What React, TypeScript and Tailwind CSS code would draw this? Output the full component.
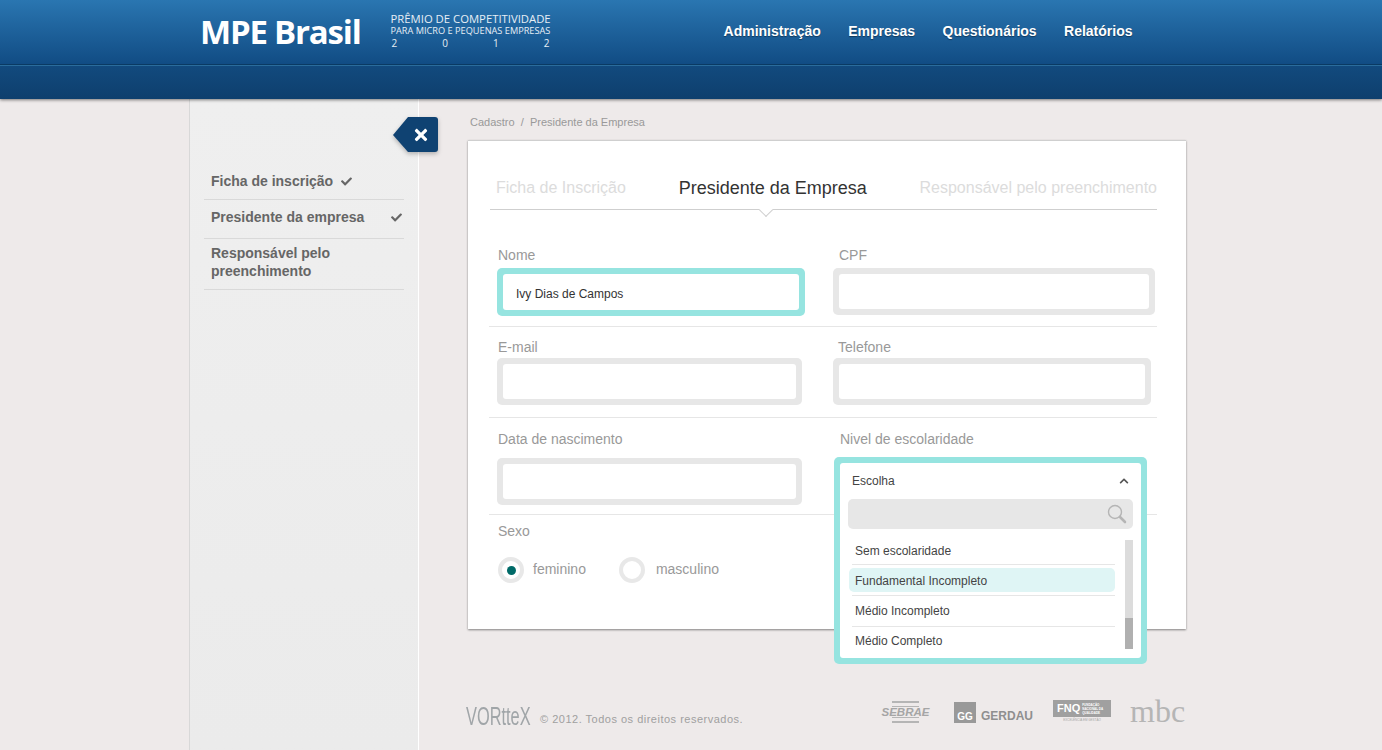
import { FaCheck, FaChevronUp, FaTimes } from "react-icons/fa";

const font = { fontFamily: '"Liberation Sans", Arial, sans-serif' };

function Field({ label, width, labelClass = "", boxClass = "mt-[5px]", active, value }: { label: string; width: string; labelClass?: string; boxClass?: string; active?: boolean; value?: string }) {
  return (
    <div className={width}>
      <p className={`text-sm leading-4 text-[#999] ${labelClass}`}>{label}</p>
      <div className={`${boxClass} rounded-[5px] p-[6px] ${active ? "h-12 bg-[#96e4e0]" : "h-[47px] bg-[#e7e7e7]"}`}>
        <div className="h-full rounded-[3px] bg-white">
          {value && <p className="pl-[13px] text-xs leading-[40px] text-[#333]">{value}</p>}
        </div>
      </div>
    </div>
  );
}

function Dropdown() {
  return (
    <div className="absolute left-[-6px] top-[26px] z-10 h-[207px] w-[313px] rounded-[5px] bg-[#96e4e0] p-[6px]">
      <div className="h-full rounded-[3px] bg-white">
        <div className="flex h-[36px] items-center justify-between pl-3 pr-3 text-xs text-[#444]">
          <span>Escolha</span>
          <FaChevronUp className="text-[10px] text-[#555]" />
        </div>
        <div className="mx-2 flex h-[30px] items-center justify-end rounded-[5px] bg-[#e7e7e7] pr-1.5">
          <svg width="20" height="20" viewBox="0 0 20 20" fill="none" stroke="#b5b5b5">
            <circle cx="8" cy="8" r="6.5" strokeWidth="1.4" />
            <path d="M13 13l5 5" strokeWidth="2.6" strokeLinecap="round" />
          </svg>
        </div>
        <div className="relative mt-[11px] pl-[9px]">
          <ul className="w-[266px] text-xs text-[#444]">
            <li className="ml-[3px] h-[25px] border-b border-[#e6e6e6] pl-[3px] pt-[4px] leading-[14px]">Sem escolaridade</li>
            <li className="mt-[3px] h-6 rounded-[5px] bg-[#dff5f5] pl-[6px] leading-[26px]">Fundamental Incompleto</li>
            <li className="ml-[3px] mt-[3px] h-[32px] border-t border-b border-[#e6e6e6] pl-[3px] leading-[31px]">Médio Incompleto</li>
            <li className="ml-[3px] h-[29px] pl-[3px] leading-[29px]">Médio Completo</li>
          </ul>
          <div className="absolute left-[285px] top-0 flex h-[109px] w-2 flex-col justify-end bg-[#dcdcdc]">
            <div className="h-[31px] bg-[#b0b0b0]" />
          </div>
        </div>
      </div>
    </div>
  );
}

function Radio({ label, checked, gap }: { label: string; checked?: boolean; gap: string }) {
  return (
    <div className={`flex items-start ${gap}`}>
      <span className="flex h-[26px] w-[26px] items-center justify-center rounded-full border-[4px] border-[#e8e8e8] bg-white">
        {checked && <span className="h-[9px] w-[9px] rounded-full bg-[#006a68]" />}
      </span>
      <span className="pt-[4px] text-sm leading-4 text-[#999]">{label}</span>
    </div>
  );
}

function Sidebar() {
  const item = "flex border-b border-[#d9d9d9] pl-[7px] text-sm font-bold leading-[18px] text-[#666]";
  return (
    <aside className="relative w-[230px] shrink-0 border-l border-r border-l-[#d8d8d8] border-r-white bg-gradient-to-b from-[#efefef] to-[#ebebeb] pl-[14px] pr-[14px] pt-[71px]">
      <div className="absolute left-[203px] top-[18px] drop-shadow-[0_2px_2px_rgba(0,0,0,0.25)]">
        <svg width="45" height="35" viewBox="0 0 45 35" className="block">
          <path d="M15 0H42a3 3 0 0 1 3 3V32a3 3 0 0 1-3 3H15L0 18z" fill="#0f4272" />
        </svg>
        <FaTimes className="absolute left-[19px] top-[9px] text-[18px] text-white" />
      </div>
      <ul>
        <li className={`${item} h-[30px] items-center pb-[7px]`}>
          Ficha de inscrição
          <FaCheck className="ml-2 text-[11px]" />
        </li>
        <li className={`${item} h-[39px] items-center pb-[4px]`}>
          Presidente da empresa
          <FaCheck className="ml-[27px] text-[11px]" />
        </li>
        <li className={`${item} h-[51px] pt-[5px]`}>
          <span>Responsável pelo<br />preenchimento</span>
        </li>
      </ul>
    </aside>
  );
}

function Card() {
  return (
    <div className="h-[489px] w-[718px] border-t border-[#cfcfcf] bg-white pl-[21px] pr-[29px] shadow-[0_1px_2px_rgba(0,0,0,0.45)]">
      <div className="relative ml-px flex h-[69px] items-end justify-between border-b border-[#cfcfcf] pb-[11px] pl-[6px] text-base leading-5 text-[#dcdcdc]">
        <span>Ficha de Inscrição</span>
        <span className="text-[18px] text-[#333]">Presidente da Empresa</span>
        <span>Responsável pelo preenchimento</span>
        <span className="absolute left-[271px] top-[64px] h-[10px] w-[10px] rotate-45 border-b border-r border-[#cfcfcf] bg-white" />
      </div>
      <div className="flex h-[117px] gap-7 border-b border-[#e6e6e6] pl-2 pt-[37px]">
        <Field label="Nome" width="w-[308px]" labelClass="pl-px" active value="Ivy Dias de Campos" />
        <Field label="CPF" width="w-[322px]" labelClass="pl-[6px]" />
      </div>
      <div className="flex h-[91px] gap-[31px] border-b border-[#e6e6e6] pl-2 pt-[12px]">
        <Field label="E-mail" width="w-[305px]" labelClass="pl-px" boxClass="mt-[3px]" />
        <Field label="Telefone" width="w-[318px]" labelClass="pl-[5px]" boxClass="mt-[3px]" />
      </div>
      <div className="flex h-[97px] gap-[38px] border-b border-[#e6e6e6] pl-2 pt-[13px]">
        <Field label="Data de nascimento" width="w-[305px]" labelClass="pl-px" boxClass="mt-[11px]" />
        <div className="relative w-[313px] text-sm leading-4 text-[#999]">
          Nivel de escolaridade
          <Dropdown />
        </div>
      </div>
      <div className="pl-[9px] pt-[8px]">
        <p className="text-sm leading-4 text-[#999]">Sexo</p>
        <div className="mt-[18px] flex gap-[33px]">
          <Radio label="feminino" gap="gap-[9px]" checked />
          <Radio label="masculino" gap="gap-[11px]" />
        </div>
      </div>
    </div>
  );
}

function Footer() {
  return (
    <div className="mt-[74px] flex h-[27px] w-[720px] items-end justify-between">
      <div className="flex items-end">
        <span className="-ml-[2px] inline-block w-[74px] origin-left scale-x-[0.63] whitespace-nowrap text-[26px] leading-[27px] text-[#a0a5a8]">VORtteX</span>
        <span className="pb-[4px] text-[11px] leading-[14px] tracking-[0.5px] text-[#a0a0a0]">© 2012. Todos os direitos reservados.</span>
      </div>
      <div className="flex items-end pb-[7px] pr-[3px] text-[#a5a5a5]">
        <div className="relative flex h-[22px] w-[47px] items-center justify-center">
          <div className="absolute inset-x-[10px] inset-y-0 bg-[repeating-linear-gradient(0deg,#b5b5b5_0_2px,transparent_2px_5px)]" />
          <span className="relative bg-[#eeeaea] text-[11.5px] font-bold italic leading-[10px]">SEBRAE</span>
        </div>
        <div className="ml-[25px] flex h-[21px] items-end gap-[5px]">
          <span className="flex h-[21px] w-[22px] items-end justify-center bg-[#999] text-[10px] font-bold leading-3 text-white">GG</span>
          <span className="text-xs font-bold leading-[14px] text-[#8f8f8f]">GERDAU</span>
        </div>
        <div className="ml-5 flex w-[58px] flex-col">
          <div className="flex h-[17px] items-center gap-[2px] bg-[#a0a0a0] px-[4px] text-white">
            <span className="text-[11px] font-bold leading-none">FNQ</span>
            <span className="text-[3px] font-bold leading-[4px]">FUNDAÇÃO<br />NACIONAL DA<br />QUALIDADE</span>
          </div>
          <span className="mt-[1px] text-center text-[3px] leading-[5px]">EXCELÊNCIA EM GESTÃO</span>
        </div>
        <span className="ml-[19px] w-[55px] text-[32px] leading-[24px] text-[#b5b5b5]" style={{ fontFamily: '"Liberation Serif", serif' }}>mbc</span>
      </div>
    </div>
  );
}

export default function App() {
  return (
    <div className="flex h-[750px] flex-col overflow-hidden bg-[#eeeaea]" style={font}>
      <header className="relative z-20 shrink-0 shadow-[0_1px_3px_rgba(0,0,0,0.5)]">
        <div className="h-[65px] border-b border-[#0a3a63] bg-gradient-to-b from-[#2a76b1] to-[#114c84]">
          <div className="ml-[200px] flex h-full items-center pb-[2px]">
            <span className="text-[33px] font-bold leading-none tracking-[-1.2px] text-white" style={{ fontFamily: '"Open Sans", sans-serif' }}>MPE Brasil</span>
            <div className="ml-[30px] flex w-[160px] flex-col text-[#e6eef5]" style={{ fontFamily: '"Open Sans", sans-serif' }}>
              <span className="whitespace-nowrap text-[11.3px] leading-[13px]">PRÊMIO DE COMPETITIVIDADE</span>
              <span className="whitespace-nowrap text-[9.2px] leading-[11px]">PARA MICRO E PEQUENAS EMPRESAS</span>
              <span className="flex justify-between px-px text-[10px] leading-[14px]"><span>2</span><span>0</span><span>1</span><span>2</span></span>
            </div>
            <nav className="ml-[173px] flex gap-[27.4px] text-sm font-bold text-white [text-shadow:0_1px_1px_rgba(0,0,0,0.4)]">
              <span>Administração</span>
              <span>Empresas</span>
              <span>Questionários</span>
              <span>Relatórios</span>
            </nav>
          </div>
        </div>
        <div className="h-[34px] border-t border-[#2a6c9c] bg-gradient-to-b from-[#124a7e] to-[#0e3f6d]" />
      </header>
      <div className="ml-[189px] flex flex-1">
        <Sidebar />
        <main className="pl-[49px] pt-[16px]">
          <p className="pl-[2px] text-[11px] leading-[14px] text-[#999]">Cadastro&nbsp; /&nbsp; Presidente da Empresa</p>
          <div className="mt-[11px]">
            <Card />
          </div>
          <Footer />
        </main>
      </div>
    </div>
  );
}
